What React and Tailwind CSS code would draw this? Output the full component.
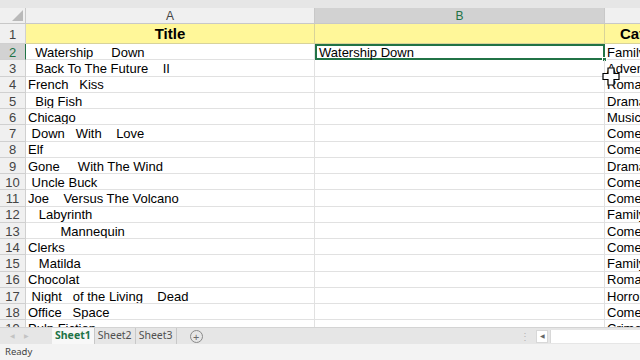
import React from "react";

const rows = [
  ["  Watership     Down", "Family"],
  ["  Back To The Future    II", "Adventure"],
  ["French   Kiss", "Romance"],
  ["  Big Fish", "Drama"],
  ["Chicago", "Musical"],
  [" Down   With    Love", "Comedy"],
  ["Elf", "Comedy"],
  ["Gone     With The Wind", "Drama"],
  [" Uncle Buck", "Comedy"],
  ["Joe    Versus The Volcano", "Comedy"],
  ["   Labyrinth", "Family"],
  ["         Mannequin", "Comedy"],
  ["Clerks", "Comedy"],
  ["   Matilda", "Family"],
  ["Chocolat", "Romance"],
  [" Night   of the Living    Dead", "Horror"],
  ["Office   Space", "Comedy"],
  ["Pulp Fiction", "Crime"],
];

const cellFont = { fontFamily: '"Liberation Sans", Arial, sans-serif' };
const uiFont = { fontFamily: '"Noto Sans", "Open Sans", sans-serif' };

function RowHead({ n, selected }) {
  return (
    <div
      className={`w-[26px] shrink-0 flex items-center justify-center pt-[2px] border-r border-b border-[#d0d0d0] text-[13px] ${
        selected ? "bg-[#d2d2d2] text-[#217346] border-r-[#217346]" : "bg-[#f0f0f0] text-[#444]"
      }`}
      style={cellFont}
    >
      {n}
    </div>
  );
}

function Cursor() {
  return (
    <svg className="absolute left-[602px] top-[59px]" width="18" height="19" viewBox="0 0 18 19">
      <path
        d="M6 1 H12 V6.5 H17 V12.5 H12 V18 H6 V12.5 H1 V6.5 H6 Z"
        fill="#ffffff"
        stroke="#000000"
        strokeWidth="1.2"
      />
    </svg>
  );
}

export default function App() {
  return (
    <div className="w-[640px] h-[360px] flex flex-col overflow-hidden bg-white select-none">
      <div className="h-[8px] bg-[#e6e6e6] shrink-0" />

      <div className="flex-1 overflow-hidden relative">
        {/* column headers */}
        <div className="flex h-[16px] text-[12px]" style={cellFont}>
          <div className="w-[26px] shrink-0 bg-[#f0f0f0] border-r border-b border-[#c8c8c8] relative overflow-hidden">
            <div className="absolute right-[2px] bottom-[2px] w-0 h-0 border-l-[11px] border-l-transparent border-b-[11px] border-b-[#b9b9b9]" />
          </div>
          <div className="w-[289px] shrink-0 bg-[#f0f0f0] border-r border-b border-[#c8c8c8] flex items-center justify-center pt-[1px] text-[#444]">
            A
          </div>
          <div className="w-[290px] shrink-0 bg-[#d2d2d2] border-r border-b border-[#c8c8c8] flex items-center justify-center pt-[1px] text-[#217346]">
            B
          </div>
          <div className="flex-1 bg-[#f0f0f0] border-b border-[#c8c8c8]" />
        </div>

        {/* row 1 */}
        <div className="flex h-[20px]">
          <RowHead n={1} />
          <div
            className="w-[289px] shrink-0 bg-[#fff799] border-r border-b border-[#d8d39a] flex items-center justify-center pt-[2px] font-bold text-[15px] text-black"
            style={cellFont}
          >
            Title
          </div>
          <div className="w-[290px] shrink-0 bg-[#fff799] border-r border-b border-[#d8d39a]" />
          <div
            className="flex-1 bg-[#fff799] border-b border-[#d8d39a] flex items-center pt-[2px] pl-[15px] font-bold text-[15px] text-black whitespace-nowrap overflow-hidden"
            style={cellFont}
          >
            Category
          </div>
        </div>

        {rows.map(([title, cat], i) => {
          const n = i + 2;
          const sel = n === 2;
          return (
            <div key={n} className="flex h-[16.25px]">
              <RowHead n={n} selected={sel} />
              <div
                className="w-[289px] shrink-0 border-r border-b border-[#e1e1e1] flex items-center pt-[2px] pl-[2px] text-[13px] text-black whitespace-pre overflow-hidden"
                style={cellFont}
              >
                {title}
              </div>
              <div
                className={`w-[290px] shrink-0 flex items-center text-[13px] text-black whitespace-pre relative ${
                  sel ? "border-2 border-[#217346] pl-[2px] pt-[1px]" : "border-r border-b border-[#e1e1e1]"
                }`}
                style={cellFont}
              >
                {sel ? "Watership Down" : ""}
                {sel && (
                  <div className="absolute -right-[4px] -bottom-[4px] w-[5px] h-[5px] bg-[#217346] border border-white" />
                )}
              </div>
              <div
                className="flex-1 border-b border-[#e1e1e1] flex items-center pt-[2px] pl-[2px] text-[13px] text-black whitespace-nowrap overflow-hidden"
                style={cellFont}
              >
                {cat}
              </div>
            </div>
          );
        })}
        <Cursor />
      </div>

      {/* sheet tabs */}
      <div className="h-[17px] shrink-0 bg-[#e6e6e6] flex items-center text-[10.5px] border-t border-[#d4d4d4]" style={uiFont}>
        <div className="w-[52px] shrink-0 flex items-center gap-[9px] pl-[10px] text-[#c3c3c3] text-[6px]">
          <span>◀</span>
          <span>▶</span>
        </div>
        <div className="h-full px-[3px] bg-[#f8f8f8] text-[#217346] font-bold flex items-center border-r border-[#c8c8c8]">
          Sheet1
        </div>
        <div className="h-full px-[3px] text-[#505050] flex items-center border-r border-[#c8c8c8]">Sheet2</div>
        <div className="h-full px-[3px] text-[#505050] flex items-center border-r border-[#c8c8c8]">Sheet3</div>
        <div className="ml-[13px] w-[13px] h-[13px] rounded-full border border-[#8a8a8a] flex items-center justify-center text-[#6a6a6a] text-[11px] leading-none">
          +
        </div>
        <div className="flex-1" />
        <div className="text-[#b5b5b5] text-[10px] mr-[6px]">⋮</div>
        <div className="w-[12px] h-[13px] bg-white border border-[#d8d8d8] flex items-center justify-center text-[#666] text-[6px]">
          ◀
        </div>
        <div className="w-[90px] h-[13px] bg-white ml-[2px] border-l border-[#d8d8d8]" />
      </div>

      {/* status bar */}
      <div className="h-[16px] shrink-0 bg-[#f3f3f3] flex items-center pl-[5px] text-[9.5px] text-[#444]" style={uiFont}>
        Ready
      </div>
    </div>
  );
}
